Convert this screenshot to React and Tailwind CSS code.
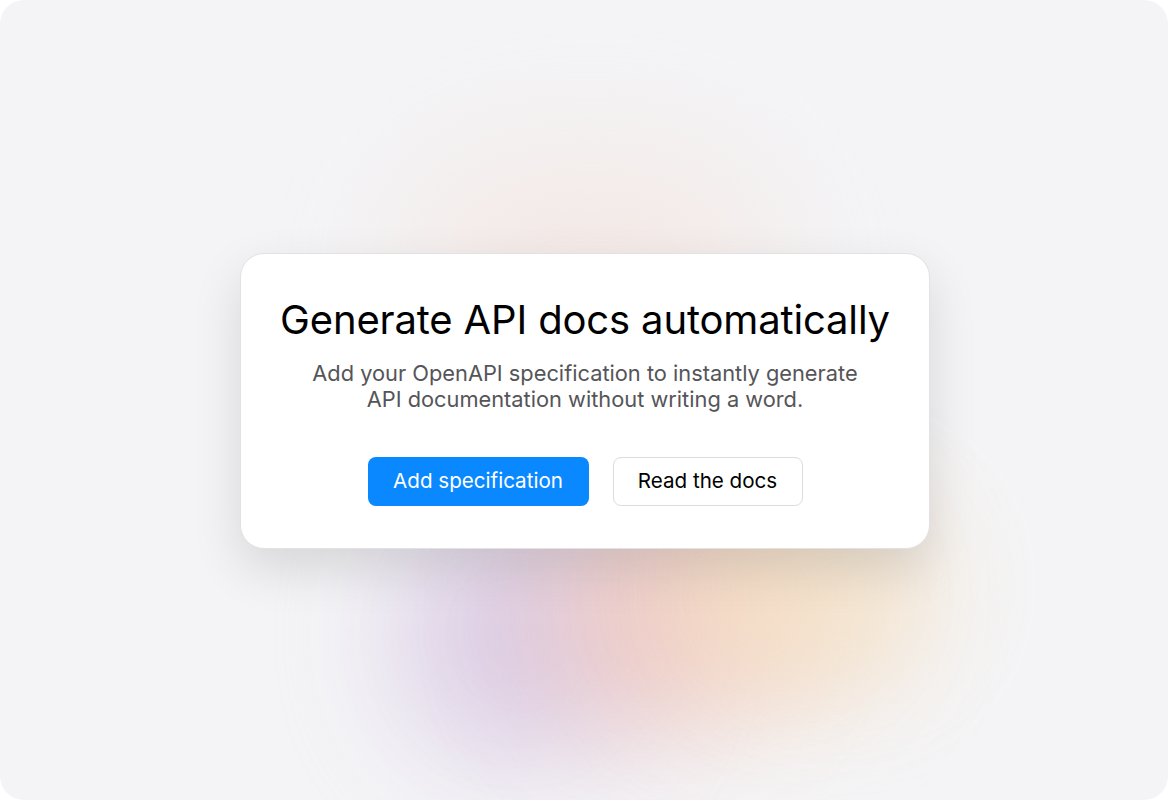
export default function App() {
  return (
    <div className="w-[1168px] h-[800px] bg-white">
      <div className="relative w-full h-full rounded-[24px] bg-[#f4f4f6] overflow-hidden flex items-center justify-center font-['Inter',sans-serif]">
        {/* soft colour glow behind the card */}
        <div className="absolute left-[400px] top-[150px] w-[380px] h-[240px] rounded-full bg-[#f3d9cf] opacity-40 blur-[70px]" />
        <div className="absolute left-[400px] top-[510px] w-[240px] h-[250px] rounded-full bg-[#d8c8e4] opacity-90 blur-[60px]" />
        <div className="absolute left-[540px] top-[500px] w-[220px] h-[230px] rounded-full bg-[#ecc5c3] opacity-85 blur-[60px]" />
        <div className="absolute left-[650px] top-[490px] w-[240px] h-[210px] rounded-full bg-[#f5d6bc] opacity-85 blur-[60px]" />
        <div className="absolute left-[740px] top-[500px] w-[200px] h-[170px] rounded-full bg-[#f4e6cc] opacity-70 blur-[60px]" />

        <div className="relative mt-[2px] ml-[2px] bg-white rounded-[24px] border border-[#e2e2e4] shadow-[0_20px_50px_rgba(0,0,0,0.12)] px-[39px] pt-[42px] pb-[42px] flex flex-col items-center text-center">
          <h1 className="text-[40px] leading-[48px] text-black tracking-[-0.15px]">Generate API docs automatically</h1>
          <p className="mt-[16px] text-[21.8px] leading-[26px] text-[#555558]">
            Add your OpenAPI specification to instantly generate
            <br />
            API documentation without writing a word.
          </p>
          <div className="mt-[45px] flex gap-[24px]">
            <button className="w-[221px] h-[49px] rounded-[8px] bg-[#0a88ff] text-white text-[20.6px]">Add specification</button>
            <button className="w-[190px] h-[49px] rounded-[8px] bg-white border border-[#dcdcdf] text-black text-[20.6px]">Read the docs</button>
          </div>
        </div>
      </div>
    </div>
  );
}
